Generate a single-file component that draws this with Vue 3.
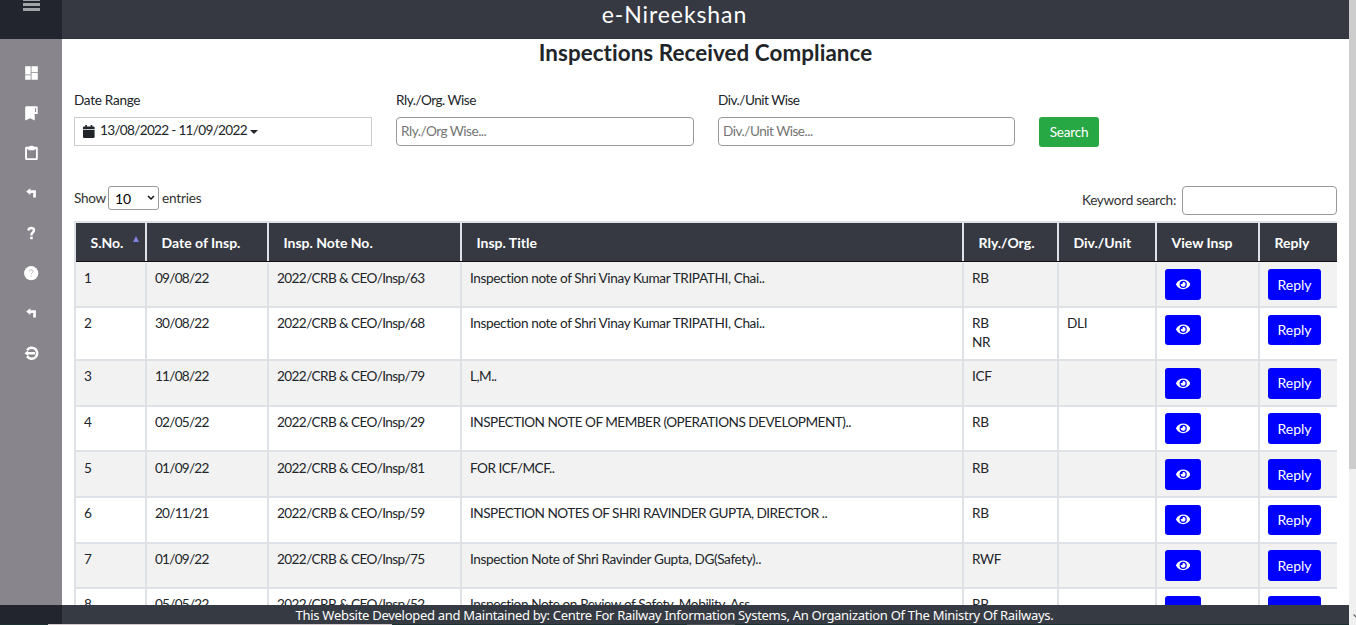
<script setup>
const columns = ['S.No.', 'Date of Insp.', 'Insp. Note No.', 'Insp. Title', 'Rly./Org.', 'Div./Unit', 'View Insp', 'Reply']

const rows = [
  { date: '09/08/22', note: 63, title: 'Inspection note of Shri Vinay Kumar TRIPATHI, Chai..', org: ['RB'], unit: '' },
  { date: '30/08/22', note: 68, title: 'Inspection note of Shri Vinay Kumar TRIPATHI, Chai..', org: ['RB', 'NR'], unit: 'DLI' },
  { date: '11/08/22', note: 79, title: 'L,M..', org: ['ICF'], unit: '' },
  { date: '02/05/22', note: 29, title: 'INSPECTION NOTE OF MEMBER (OPERATIONS DEVELOPMENT)..', org: ['RB'], unit: '' },
  { date: '01/09/22', note: 81, title: 'FOR ICF/MCF..', org: ['RB'], unit: '' },
  { date: '20/11/21', note: 59, title: 'INSPECTION NOTES OF SHRI RAVINDER GUPTA, DIRECTOR ..', org: ['RB'], unit: '' },
  { date: '01/09/22', note: 75, title: 'Inspection Note of Shri Ravinder Gupta, DG(Safety)..', org: ['RWF'], unit: '' },
  { date: '05/05/22', note: 52, title: 'Inspection Note on Review of Safety, Mobility, Ass..', org: ['RB'], unit: '' }
]

const isUpper = (s) => s === s.toUpperCase()
</script>

<template>
  <div class="page">
    <div class="body">
      <aside class="sidebar">
        <div class="burger">
          <svg width="18" height="12" viewBox="0 0 18 12"><path d="M0 0h17v1H0zM0 3h17v3H0zM0 8h17v3H0z" fill="#a0a4a6" /></svg>
        </div>
        <nav class="menu">
          <a><svg viewBox="0 0 16 16"><path d="M2.200 1.300h5.500v8.200h-5.500zM8.500 1.300h6.300v6h-6.300zM2.200 10.200h5.500v4.600h-5.500zM8.500 8h6.300v6.800h-6.300z" /></svg></a>
          <a><svg viewBox="0 0 16 16"><path d="M3.600 1.200H13.400q1.300 0 1.300 1.300V9h-3v6.500l-4.500-2.200L2.200 15.500V2.600Q2.200 1.200 3.600 1.200z" /><path d="M12.100 3h1v4h-1z" fill="#88868c" /></svg></a>
          <a><svg viewBox="0 0 16 16"><path fill-rule="evenodd" d="M3.500 1.800h2.300Q6.200.8 8.500.8t2.600 1h2.300q1.400 0 1.400 1.400v10.500q0 1.400-1.400 1.400H3.500q-1.400 0-1.400-1.400V3.200q0-1.400 1.400-1.400zM4 4.300v9h9v-9h-1.400v1H5.400v-1z" /></svg></a>
          <a><svg viewBox="0 0 16 16"><path d="M3.200 6.600 7.300 3.300v2h5.600v7.200h-2.700V8H7.300v2z" /></svg></a>
          <a><svg viewBox="0 0 16 16"><path d="M5.600 5.500V4.800Q6 3 8.300 3q2.700 0 2.700 2.300 0 1.200-1.300 2.100T8.400 10.500" fill="none" stroke="#fff" stroke-width="2.400" /><path d="M7.200 11.700h2.500v2.500H7.200z" /></svg></a>
          <a><svg viewBox="0 0 16 16"><circle cx="8.200" cy="8.200" r="7.100" /><path d="M6.300 6.400q0-1.600 1.900-1.600t1.900 1.500q0 .8-.9 1.300T8.300 9.300M8.300 10.700v1" fill="none" stroke="#bdbcc0" stroke-width="1" /></svg></a>
          <a><svg viewBox="0 0 16 16"><path d="M3.200 6.600 7.300 3.300v2h5.600v7.200h-2.700V8H7.300v2z" /></svg></a>
          <a><svg viewBox="0 0 16 16"><path d="M4.100 5.200A5.500 5.500 0 1 1 4.100 11.200" fill="none" stroke="#fff" stroke-width="2.500" /><path d="M1.500 8.200 5 5.400V7h7v2.400H5V11z" /></svg></a>
        </nav>
      </aside>

      <main class="main">
        <header class="brand">e-Nireekshan</header>
        <h1>Inspections Received Compliance</h1>

        <form class="filters" @submit.prevent>
          <div class="field first">
            <label>Date Range</label>
            <div class="range">
              <svg width="12" height="13" viewBox="0 0 12 13"><path d="M0 4.700h11.600V12q0 1-1 1H1q-1 0-1-1zM0 4V2.600Q0 1.600 1 1.600h1.300V0h1.600v1.600h3.800V0h1.600v1.600h1.300q1 0 1 1V4z" fill="#212529" /></svg>
              <span>13/08/2022 - 11/09/2022</span>
              <i class="caret"></i>
            </div>
          </div>
          <div class="field">
            <label>Rly./Org. Wise</label>
            <input placeholder="Rly./Org Wise..." />
          </div>
          <div class="field">
            <label>Div./Unit Wise</label>
            <input placeholder="Div./Unit Wise..." />
          </div>
          <button class="search">Search</button>
        </form>

        <div class="tools">
          <div class="length">
            <span class="show">Show</span>
            <div class="select">10<svg width="8" height="6" viewBox="0 0 8 6"><path d="M1 1l3 3 3-3" fill="none" stroke="#111" stroke-width="1.500" /></svg></div>
            <span>entries</span>
          </div>
          <div class="keyword"><span>Keyword search:</span><input /></div>
        </div>

        <div class="table">
          <div class="row head">
            <div v-for="(c, i) in columns" :key="c"><span>{{ c }}</span><i v-if="i === 0" class="sort"></i></div>
          </div>
          <div v-for="(r, i) in rows" :key="i" class="row" :class="{ odd: i % 2 === 0, tall: r.org.length > 1 }">
            <div>{{ i + 1 }}</div>
            <div class="date">{{ r.date }}</div>
            <div class="note">2022/CRB &amp; CEO/Insp/{{ r.note }}</div>
            <div class="title" :class="{ upper: isUpper(r.title) }">{{ r.title }}</div>
            <div><p v-for="o in r.org" :key="o">{{ o }}</p></div>
            <div>{{ r.unit }}</div>
            <div class="action">
              <button class="btn eye">
                <svg viewBox="0 0 576 512"><path d="M572.520 241.400C518.290 135.590 410.930 64 288 64S57.680 135.640 3.480 241.410a32.350 32.350 0 0 0 0 29.190C57.710 376.410 165.070 448 288 448s230.320-71.640 284.520-177.410a32.350 32.350 0 0 0 0-29.190zM288 400a144 144 0 1 1 144-144 143.930 143.930 0 0 1-144 144zm0-240a95.310 95.310 0 0 0-25.310 3.790 47.850 47.850 0 0 1-66.900 66.900A95.780 95.780 0 1 0 288 160z" fill="#fff" /></svg>
              </button>
            </div>
            <div class="action"><button class="btn">Reply</button></div>
          </div>
        </div>
      </main>

      <div class="scroll"><div class="thumb"></div><svg width="5" height="7" viewBox="0 0 5 7"><path d="M1 1l4 4V3L3 1z" fill="#555" /></svg></div>
    </div>

    <footer class="footer">
      <p>This Website Developed and Maintained by: Centre For Railway Information Systems, An Organization Of The Ministry Of Railways.</p>
      <div class="edge"><i class="light"></i><i class="mid"></i></div>
    </footer>
  </div>
</template>

<style>
body { overflow: hidden; }
</style>

<style scoped>
* { box-sizing: border-box; }
.page { position: relative; height: 625px; overflow: hidden; background: #fff; color: #212529; font: 13.600px/19px Lato, "Liberation Sans", sans-serif; letter-spacing: -0.3px; }
p { margin: 0; }
.body { display: flex; height: 625px; overflow: hidden; }
.sidebar { flex: 0 0 62px; height: 625px; background: #88868c; }
.burger { height: 39px; padding-left: 23px; background: #22252e; line-height: 0; }
.menu { display: flex; flex-direction: column; align-items: center; padding-top: 14px; }
.menu a { display: flex; align-items: center; height: 40px; }
.menu svg { width: 16px; height: 16px; fill: #fff; }
.main { flex: 1; min-width: 0; height: 625px; overflow: hidden; }
.brand { height: 39px; background: #363942; border-bottom: 1px solid #30333a; color: #fff; text-align: center; font-size: 23px; line-height: 28px; padding-right: 62px; letter-spacing: 0.900px; }
h1 { margin: 0; height: 52px; font-size: 22.400px; line-height: 28px; font-weight: 700; text-align: center; letter-spacing: 0.070px; }
.filters { display: flex; gap: 24px; height: 95px; padding-left: 12px; letter-spacing: -0.500px; }
.field { width: 298px; }
.field:nth-child(3) { width: 297px; }
.field label { display: block; height: 26px; }
.first label { letter-spacing: -0.300px; }
input { display: block; width: 100%; height: 29px; padding: 0 4px 2px; border: 1px solid #999; border-radius: 4px; font: inherit; letter-spacing: inherit; background: #fff; outline: 0; }
input::placeholder { color: #757575; opacity: 1; }
.range { display: flex; align-items: center; height: 29px; border: 1px solid #ccc; padding-left: 8px; letter-spacing: -0.690px; }
.range span { margin: 0 3px 2px 5px; }
.caret { border: 4px solid transparent; border-top-color: #212529; border-bottom: 0; margin-top: 1px; }
button { border: 0; color: #fff; font: inherit; letter-spacing: inherit; border-radius: 3px; padding: 0; }
.search { margin-top: 26px; width: 60px; height: 30px; background: #28a745; letter-spacing: -0.250px; }
.tools { display: flex; justify-content: space-between; height: 35px; padding: 0 12px; }
.length { display: flex; align-items: center; height: 24px; gap: 3px; color: #333; letter-spacing: -0.200px; }
.show { width: 31px; letter-spacing: -0.350px; }
.select { display: flex; align-items: center; justify-content: space-between; width: 51px; height: 24px; padding: 0 3px 0 6px; border: 1px solid #999; border-radius: 3px; color: #000; font-size: 14px; letter-spacing: 0; }
.keyword { display: flex; align-items: center; height: 29px; gap: 6px; color: #333; }
.keyword span { margin-bottom: 1px; }
.keyword input { width: 155px; flex: none; }
.table { margin-left: 12px; width: 1263px; border-left: 2px solid #dee2e6; }
.row { display: grid; grid-template-columns: 71px 122px 193px 502px 95px 98px 103px 77px; height: 45.600px; background: #fff; border-bottom: 2px solid #dee2e6; }
.row > div { padding: 6.100px 7.500px 0 8px; border-right: 2px solid #dee2e6; white-space: nowrap; }
.row > div:last-child { border-right: 0; }
.row > .date { letter-spacing: -0.760px; }
.row > .note { letter-spacing: -0.600px; }
.row > .title { letter-spacing: -0.380px; }
.row > .upper { letter-spacing: -0.510px; }
.odd { background: #f2f2f2; }
.tall { height: 53.400px; }
.row.head { height: 41.200px; background: #363942; color: #fff; font-size: 14px; font-weight: 700; border-top: 2px solid #dee2e6; border-bottom: 1px solid #111; letter-spacing: 0; }
.row.head > div { display: flex; padding: 10px 0 0 14.500px; }
.head + .row { height: 45.700px; padding-top: 0.400px; }
.sort { border: 3.500px solid transparent; border-top: 0; border-bottom: 6px solid #8080e0; height: 0; margin: 3px 0 0 10px; }
.row > .action { padding: 6.600px 0 0 8px; }
.tall > .action { padding-top: 6.900px; }
.btn { display: flex; align-items: center; justify-content: center; width: 53px; height: 30.700px; padding-bottom: 0.600px; background: #00f; font-size: 14px; letter-spacing: 0; }
.eye { width: 36px; }
.eye svg { width: 14.400px; height: 12.800px; }
.scroll { flex: 0 0 7px; height: 625px; background: #f0f0f0; display: flex; flex-direction: column; justify-content: space-between; }
.thumb { height: 469px; background: #cdcdcd; }
.scroll svg { margin: 0 0 5px 3px; width: 4px; }
.footer { position: absolute; left: 0; bottom: 0; width: 1349px; height: 20px; background: linear-gradient(90deg, #22252e 62px, #363a42 62px); color: #fff; text-align: center; }
.footer p { height: 19px; font: 13px/20px "Noto Sans", sans-serif; letter-spacing: -0.285px; }
.edge { display: flex; height: 1px; background: #1f3032; }
.light { margin-left: 48px; width: 344px; background: #d0c8ca; }
.mid { margin-left: 295px; width: 48px; background: #4c5156; }
</style>
